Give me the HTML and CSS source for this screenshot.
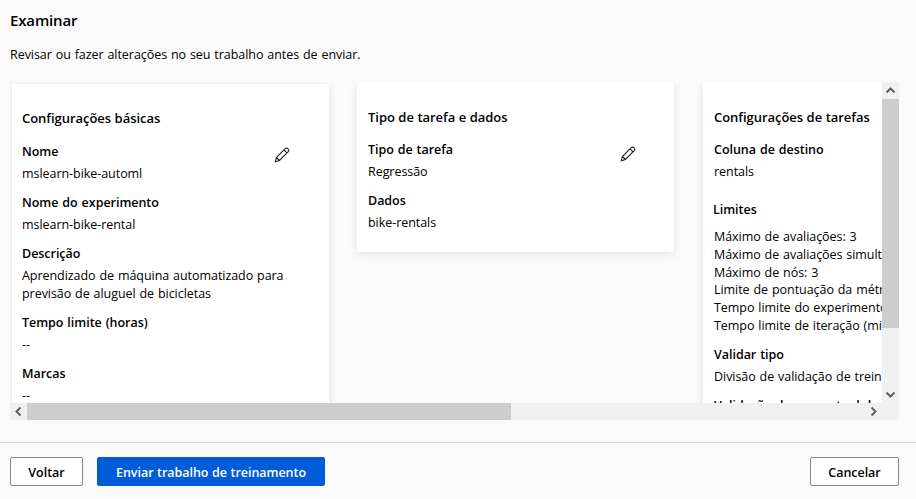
FILE: index.html
```html
<!DOCTYPE html>
<html lang="pt">
<head>
<meta charset="utf-8">
<title>Examinar</title>
<link rel="stylesheet" href="styles.css">
</head>
<body>
<main class="review">
  <h1>Examinar</h1>
  <p class="intro">Revisar ou fazer alterações no seu trabalho antes de enviar.</p>
  <div class="scroller">
    <div class="cards">
      <section class="card card-basic">
        <h2>Configurações básicas</h2>
        <svg class="edit" viewBox="0 0 16 16"><path d="M1.3 14.7 2.4 10.5 11.2 1.7Q12.7.4 14.1 1.8T14.2 4.7L5.4 13.5ZM2.4 10.5 5.4 13.5M10 2.9 13 5.9"/></svg>
        <dl>
          <dt>Nome</dt><dd>mslearn-bike-automl</dd>
          <dt>Nome do experimento</dt><dd>mslearn-bike-rental</dd>
          <dt>Descrição</dt><dd>Aprendizado de máquina automatizado para<br>previsão de aluguel de bicicletas</dd>
          <dt>Tempo limite (horas)</dt><dd>--</dd>
          <dt>Marcas</dt><dd>--</dd>
        </dl>
      </section>
      <section class="card card-type">
        <h2>Tipo de tarefa e dados</h2>
        <svg class="edit" viewBox="0 0 16 16"><path d="M1.3 14.7 2.4 10.5 11.2 1.7Q12.7.4 14.1 1.8T14.2 4.7L5.4 13.5ZM2.4 10.5 5.4 13.5M10 2.9 13 5.9"/></svg>
        <dl>
          <dt>Tipo de tarefa</dt><dd>Regressão</dd>
          <dt>Dados</dt><dd>bike-rentals</dd>
        </dl>
      </section>
      <section class="card card-settings">
        <h2>Configurações de tarefas</h2>
        <dl>
          <dt>Coluna de destino</dt><dd>rentals</dd>
          <dt class="limits">Limites</dt>
          <dd class="limits-list">Máximo de avaliações: 3<br>Máximo de avaliações simultâneas: 3<br>Máximo de nós: 3<br>Limite de pontuação da métrica: 0.085<br>Tempo limite do experimento: 15<br>Tempo limite de iteração (minutos): 15</dd>
          <dt>Validar tipo</dt><dd>Divisão de validação de treinamento</dd>
          <dt>Validação de percentual de dados</dt><dd>10</dd>
        </dl>
      </section>
    </div>
    <div class="vbar">
      <svg class="arrow" viewBox="0 0 17 17"><path d="M4.5 10.5 8.5 6.5 12.5 10.5"/></svg>
      <div class="vthumb"></div>
      <svg class="arrow end" viewBox="0 0 17 17"><path d="M4.5 6.5 8.5 10.5 12.5 6.5"/></svg>
    </div>
    <div class="hbar">
      <svg class="arrow" viewBox="0 0 17 17"><path d="M10.5 4.5 6.5 8.5 10.5 12.5"/></svg>
      <div class="hthumb"></div>
      <svg class="arrow end" viewBox="0 0 17 17"><path d="M6.5 4.5 10.5 8.5 6.5 12.5"/></svg>
    </div>
    <div class="corner"></div>
  </div>
</main>
<footer>
  <button class="back">Voltar</button>
  <button class="submit">Enviar trabalho de treinamento</button>
  <button class="cancel">Cancelar</button>
</footer>
</body>
</html>
```
FILE: styles.css
```css
* { box-sizing: border-box; }
body {
  margin: 0;
  height: 499px;
  overflow: hidden;
  background: #fafafa;
  color: #000;
  font: 12.5px/18px "Open Sans", "Noto Sans", sans-serif;
  letter-spacing: -.05px;
  word-spacing: .7px;
}
h1, h2, p, dl, dd { margin: 0; }
.review { height: 442px; padding: 9px 17px 0 10px; }
h1 { font-size: 15px; line-height: 22px; font-weight: 600; letter-spacing: -.15px; }
.intro { margin-top: 14px; height: 37px; line-height: 20px; }
.scroller {
  display: grid;
  grid-template: 321px 17px / 872px 17px;
  width: 889px;
}
.cards {
  display: flex;
  align-items: flex-start;
  gap: 28px;
  padding-left: 2px;
  overflow: hidden;
}
.card {
  position: relative;
  flex: 0 0 317px;
  padding: 26px 11px 20px;
  background: #fff;
  border-radius: 2px;
  box-shadow: 0 2px 8px rgba(0, 0, 0, .1);
}
.card-basic { margin-top: 2px; padding: 25px 10px 21px; }
.card-settings { margin-left: 1px; }
h2 { margin-bottom: 15px; font-size: 13px; line-height: 18px; font-weight: 600; white-space: nowrap; letter-spacing: -.04px; word-spacing: .2px; }
.card-basic h2 { margin-bottom: 16px; }
dt { font-weight: 600; white-space: nowrap; letter-spacing: -.03px; }
dd { margin-top: 4px; white-space: nowrap; }
dd + dt { margin-top: 11px; }
dd + .limits { margin: 20px 0 0 -1px; }
.limits-list { margin-top: 9px; line-height: 17.8px; }
.limits-list + dt { margin-top: 11px; }
.edit {
  position: absolute;
  top: 63px;
  right: 39px;
  width: 16px;
  height: 16px;
  fill: none;
  stroke: #222;
  stroke-width: 1.1;
}
.card-type .edit { top: 64px; right: 38px; }
.vbar, .hbar, .corner { background: #f0f0f0; }
.vbar { display: flex; flex-direction: column; }
.hbar { display: flex; }
.arrow { flex: none; width: 17px; height: 17px; fill: none; stroke: #606060; stroke-width: 2; }
.vthumb { height: 229px; background: #cdcdcd; }
.hthumb { width: 484px; background: #cdcdcd; }
.vbar .end { margin-top: auto; }
.hbar .end { margin-left: auto; }
footer {
  display: flex;
  height: 57px;
  padding: 14px 17px 0 10px;
  border-top: 1px solid #d6d6d6;
}
button {
  height: 29px;
  padding: 2px 0 0;
  border: 1px solid #8a8886;
  border-radius: 2px;
  background: #fff;
  color: #000;
  font: 600 12.5px/18px "Open Sans", "Noto Sans", sans-serif;
  letter-spacing: -.04px;
  word-spacing: .4px;
}
.back { width: 73px; }
.submit { width: 228px; margin-left: 14px; border-color: #015cda; background: #015cda; color: #fff; }
.cancel { width: 89px; margin-left: auto; }
```
